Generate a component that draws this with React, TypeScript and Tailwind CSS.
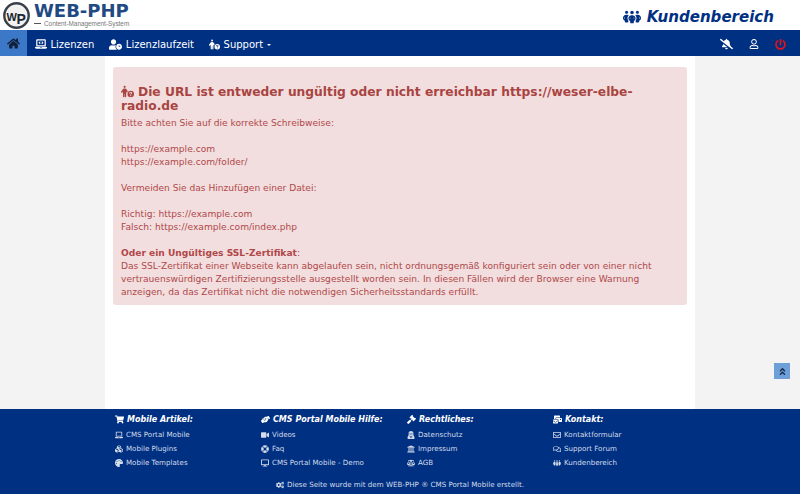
import { FaHome, FaLaptopCode, FaUserClock, FaBellSlash, FaRegUser, FaPowerOff, FaShoppingCart, FaLaptop, FaCubes, FaPalette, FaHandsHelping, FaVideo, FaLifeRing, FaDesktop, FaGavel, FaUserSecret, FaUniversity, FaBalanceScale, FaMailBulk, FaRegEnvelope, FaRegComments, FaCogs, FaAngleDoubleUp } from 'react-icons/fa'
import { FaPeopleGroup, FaPersonCircleQuestion } from 'react-icons/fa6'

const dejavu = "font-['DejaVu_Sans',sans-serif]"

function Logo() {
  return (
    <div className="flex items-start">
      <svg width="27" height="27" viewBox="0 0 27 27" className="ml-[3px] mt-[2px]">
        <circle cx="13.5" cy="13.5" r="12.2" fill="#f2f2f2" stroke="#3a4048" strokeWidth="2.4" />
        <text x="3.5" y="19" fontSize="11" fontWeight="700" fontFamily="Liberation Sans" fill="#20262e">W</text>
        <text x="13.5" y="22" fontSize="14" fontWeight="700" fontFamily="Liberation Sans" fill="#20262e">P</text>
      </svg>
      <div className="ml-[4px] flex flex-col">
        <span className="mt-[2px] text-[18px] font-bold leading-[18px] text-[#1f4a82]">WEB-PHP</span>
        <span className="flex items-center font-['Liberation_Sans',sans-serif] text-[6.4px] leading-[7px] text-[#777]">
          <span className="mr-[3px] h-px w-[7px] bg-[#555]" />
          Content-Management-System
        </span>
      </div>
    </div>
  )
}

function NavItem({ icon, label, caret }: { icon: React.ReactNode; label: string; caret?: boolean }) {
  return (
    <div className="flex items-center gap-[3.5px] text-[10px] text-white">
      {icon}
      <span>{label}</span>
      {caret && <span className="mt-[1px] h-0 w-0 border-x-[2px] border-t-[2px] border-x-transparent border-t-white" />}
    </div>
  )
}

function FootLink({ icon, label }: { icon: React.ReactNode; label: string }) {
  return (
    <div className="flex h-[14px] items-center gap-[3px] text-[7.1px] text-[#d5dcea]">
      {icon}
      <span>{label}</span>
    </div>
  )
}

function FootColumn({ icon, title, className, children }: { icon: React.ReactNode; title: string; className: string; children: React.ReactNode }) {
  return (
    <div className={className}>
      <div className="mb-[1px] flex h-[15px] items-center gap-[3px] text-[8px] font-bold italic text-white">
        {icon}
        <span>{title}</span>
      </div>
      {children}
    </div>
  )
}

export default function App() {
  const ic = "h-[8px] w-auto"
  const head = "h-[9px] w-auto"
  return (
    <div className={`relative flex h-[494px] w-[800px] flex-col overflow-hidden bg-[#f3f3f3] ${dejavu}`}>
      <header className="flex h-[30px] items-start justify-between bg-white">
        <Logo />
        <div className="mr-[26px] mt-[6px] flex items-center gap-[6px] text-[#003082]">
          <FaPeopleGroup className="h-[16px] w-[18px]" />
          <span className="text-[15.05px] font-bold italic">Kundenbereich</span>
        </div>
      </header>

      <nav className="flex h-[26px] items-stretch bg-[#003082]">
        <div className="flex w-[27px] items-center justify-center bg-[#3c78c8] text-[#10203a]">
          <FaHome className="h-[13px] w-[13px]" />
        </div>
        <div className="ml-[8px] flex items-center gap-[15px] pt-[2px]">
          <NavItem icon={<FaLaptopCode className="h-[12px] w-[12px]" />} label="Lizenzen" />
          <NavItem icon={<FaUserClock className="h-[11px] w-[13px]" />} label="Lizenzlaufzeit" />
          <NavItem icon={<FaPersonCircleQuestion className="h-[11px] w-[11px]" />} label="Support" caret />
        </div>
        <div className="ml-auto mr-[14px] flex items-center gap-[16px] pt-[2px] text-white">
          <FaBellSlash className="h-[12px] w-[13px]" />
          <FaRegUser className="h-[10px] w-[10px]" />
          <FaPowerOff className="h-[11px] w-[11px] text-[#e0131a]" />
        </div>
      </nav>

      <main className="mx-auto h-[353px] w-[590px] bg-white px-[8px] pt-[11px]">
        <div className="h-[238px] rounded-[3px] bg-[#f2dede] px-[8px] pt-[18px] text-[9.1px] leading-[13px] text-[#b0484a]">
          <h1 className="mb-[4px] text-[12.25px] font-bold leading-[14px] text-[#a94442]">
            <FaPersonCircleQuestion className="mr-[4px] inline-block h-[13px] w-[13px] align-[-2px]" />
            Die URL ist entweder ungültig oder nicht erreichbar https://weser-elbe-radio.de
          </h1>
          <p>Bitte achten Sie auf die korrekte Schreibweise:</p>
          <p className="mt-[13px]">https://example.com</p>
          <p>https://example.com/folder/</p>
          <p className="mt-[13px]">Vermeiden Sie das Hinzufügen einer Datei:</p>
          <p className="mt-[13px]">Richtig: https://example.com</p>
          <p>Falsch: https://example.com/index.php</p>
          <p className="mt-[13px]"><b>Oder ein Ungültiges SSL-Zertifikat</b>:</p>
          <p>Das SSL-Zertifikat einer Webseite kann abgelaufen sein, nicht ordnungsgemäß konfiguriert sein oder von einer nicht vertrauenswürdigen Zertifizierungsstelle ausgestellt worden sein. In diesen Fällen wird der Browser eine Warnung anzeigen, da das Zertifikat nicht die notwendigen Sicherheitsstandards erfüllt.</p>
        </div>
      </main>

      <footer className="relative h-[85px] bg-[#003082] pt-[3px]">
        <div className="flex pl-[115px]">
          <FootColumn className="w-[146px]" icon={<FaShoppingCart className={head} />} title="Mobile Artikel:">
            <FootLink icon={<FaLaptop className={ic} />} label="CMS Portal Mobile" />
            <FootLink icon={<FaCubes className={ic} />} label="Mobile Plugins" />
            <FootLink icon={<FaPalette className={ic} />} label="Mobile Templates" />
          </FootColumn>
          <FootColumn className="w-[146px]" icon={<FaHandsHelping className={head} />} title="CMS Portal Mobile Hilfe:">
            <FootLink icon={<FaVideo className={ic} />} label="Videos" />
            <FootLink icon={<FaLifeRing className={ic} />} label="Faq" />
            <FootLink icon={<FaDesktop className={ic} />} label="CMS Portal Mobile - Demo" />
          </FootColumn>
          <FootColumn className="w-[146px]" icon={<FaGavel className={head} />} title="Rechtliches:">
            <FootLink icon={<FaUserSecret className={ic} />} label="Datenschutz" />
            <FootLink icon={<FaUniversity className={ic} />} label="Impressum" />
            <FootLink icon={<FaBalanceScale className={ic} />} label="AGB" />
          </FootColumn>
          <FootColumn className="w-[146px]" icon={<FaMailBulk className={head} />} title="Kontakt:">
            <FootLink icon={<FaRegEnvelope className={ic} />} label="Kontaktformular" />
            <FootLink icon={<FaRegComments className={ic} />} label="Support Forum" />
            <FootLink icon={<FaPeopleGroup className={ic} />} label="Kundenbereich" />
          </FootColumn>
        </div>
        <div className="mt-[10px] flex items-center justify-center gap-[3px] text-[7.14px] text-[#d5dcea]">
          <FaCogs className={ic} />
          <span>Diese Seite wurde mit dem WEB-PHP ® CMS Portal Mobile erstellt.</span>
        </div>
      </footer>

      <button className="absolute left-[774px] top-[363px] flex h-[16px] w-[16px] items-center justify-center bg-[#6f9fd8] text-[#1b2c4a]">
        <FaAngleDoubleUp className="h-[9px] w-[9px]" />
      </button>
    </div>
  )
}
